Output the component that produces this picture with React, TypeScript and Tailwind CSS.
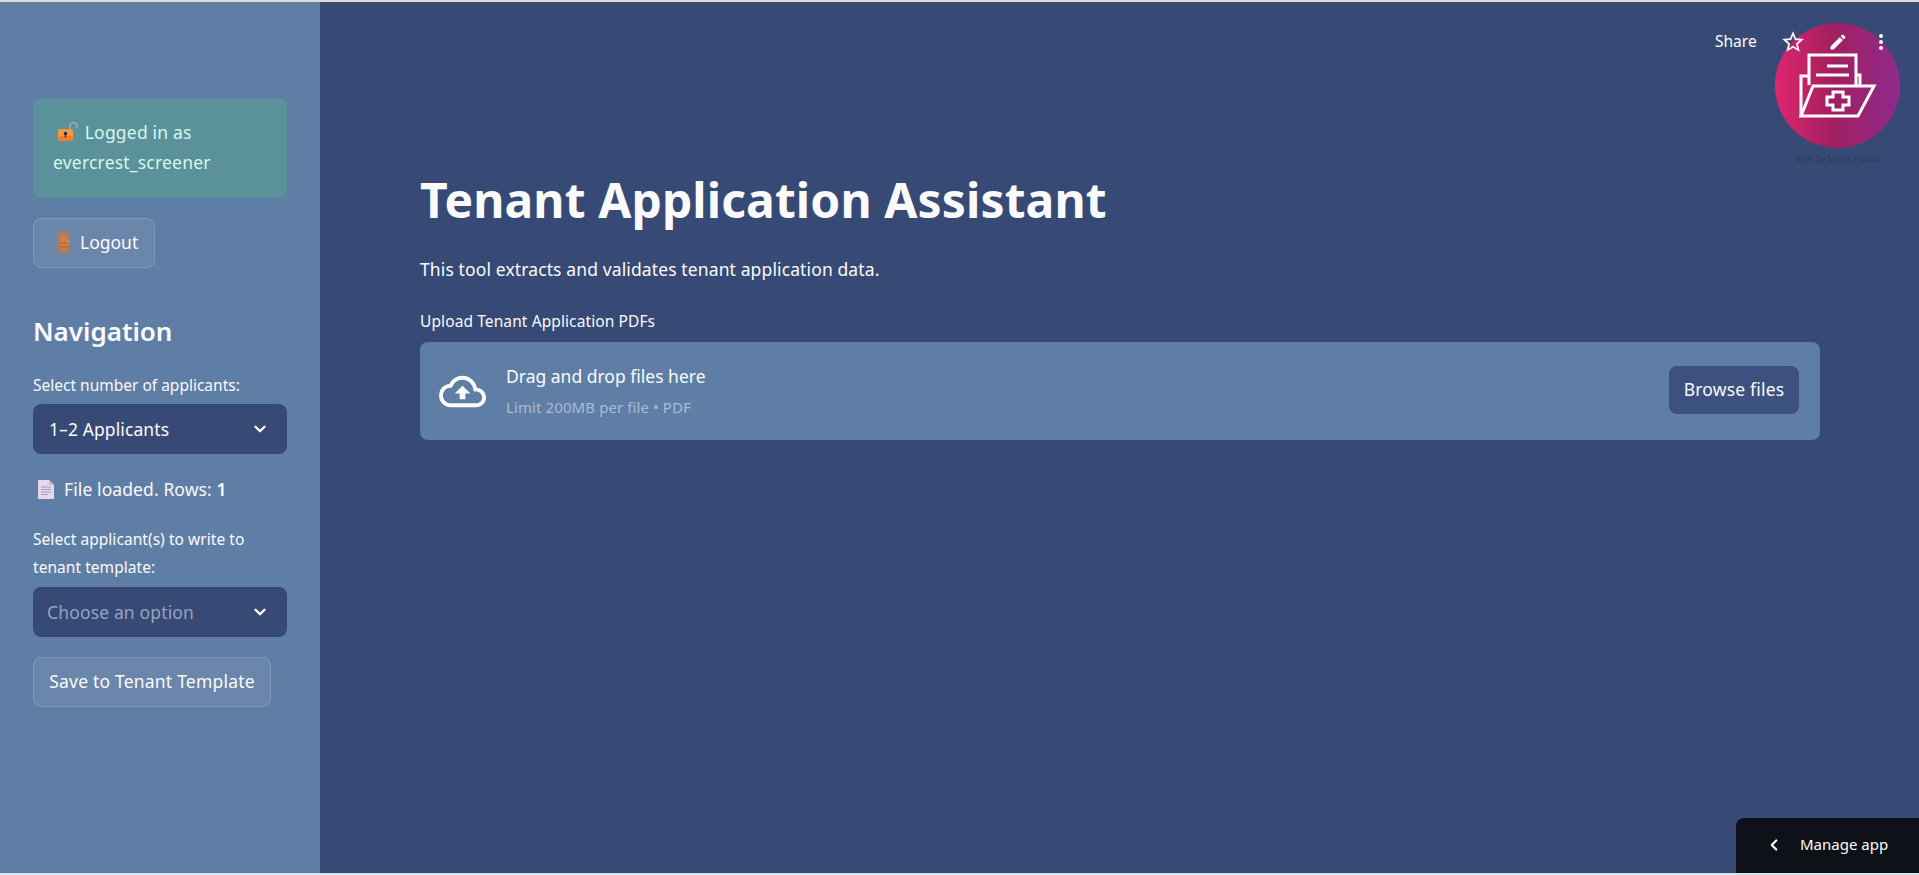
import { ChevronDown, ChevronLeft } from "lucide-react";
import { MdEdit, MdMoreVert, MdOutlineCloudUpload, MdStarBorder } from "react-icons/md";

const font = "font-['Noto_Sans',sans-serif]";

function LockIcon() {
  return (
    <svg width="21" height="21" viewBox="0 0 21 21" className="mr-[2px] ml-[4px] inline-block align-[-3px]">
      <path d="M13 9V5a3.5 3.5 0 0 1 7 0v2" fill="none" stroke="#a9a8bd" strokeWidth="1.6" />
      <rect x="1" y="8" width="15" height="12" rx="1.5" fill="#f59a3c" />
      <rect x="1" y="15" width="15" height="5" rx="1.5" fill="#ef7f2e" />
      <circle cx="8.5" cy="12.5" r="1.7" fill="#2d2a4a" />
      <rect x="7.8" y="13" width="1.4" height="3.5" fill="#2d2a4a" />
    </svg>
  );
}

function DoorIcon() {
  return (
    <svg width="13" height="21" viewBox="0 0 13 21" className="shrink-0">
      <rect x="0.5" y="0.5" width="12" height="20" fill="#c9814f" />
      <rect x="2" y="2" width="9" height="8" fill="none" stroke="#b06f42" />
      <rect x="2" y="11.5" width="9" height="3" fill="none" stroke="#b06f42" />
      <rect x="2" y="16" width="9" height="3" fill="none" stroke="#b06f42" />
      <circle cx="11" cy="9.5" r="0.8" fill="#f2c27e" />
    </svg>
  );
}

function PageIcon() {
  return (
    <svg width="16" height="20" viewBox="0 0 16 20" className="shrink-0">
      <path d="M0 1h11l5 5v14H0z" fill="#e6d8ec" />
      <path d="M11 1l5 5h-5z" fill="#c9b8d6" />
      <path d="M3 8h10M3 10.5h10M3 13h10M3 15.5h7" stroke="#a99bb4" strokeWidth="1" />
    </svg>
  );
}

function FolderLogo() {
  return (
    <svg viewBox="0 0 125 125" className="absolute inset-0 h-full w-full" fill="none" stroke="#ffffff" strokeWidth="3" strokeLinejoin="miter">
      <path d="M34 62V32h47v30" />
      <path d="M52 43h21M41 52h33" />
      <path d="M81 52h4v11" />
      <path d="M34 53h-8v40" />
      <path d="M38 63h61L83 93H26z" />
      <path d="M58 69h10v5h6v8h-6v5H58v-5h-6v-8h6z" />
    </svg>
  );
}

export default function App() {
  return (
    <div className={`${font} relative flex h-[875px] w-full flex-col overflow-hidden bg-[#d3e8ee] text-[#fafafa]`}>
      <div className="h-[2px] shrink-0 bg-[#dcdcdc]" />
      <div className="flex h-[871px] shrink-0">
        <aside className="flex w-[320px] shrink-0 flex-col bg-[#5f7ea6] px-[33px] pt-[96px]">
          <div className="h-[100px] rounded-[8px] bg-[#5a919a] px-[20px] pt-[19px] text-[17.5px] leading-[30px] tracking-[0.2px] text-[#d8f8ea]">
            <LockIcon /> Logged in as
            <br />
            evercrest_screener
          </div>
          <button className="mt-[20px] flex h-[50px] w-[122px] items-center gap-[10px] rounded-[8px] border border-[#8098ba] bg-[#6b86ab] pb-[1px] pl-[23px] text-[17.5px]">
            <DoorIcon />
            Logout
          </button>
          <h2 className="mt-[46px] text-[26px] leading-[34px] font-semibold">Navigation</h2>
          <label className="mt-[27px] text-[15.5px] leading-[20px]">Select number of applicants:</label>
          <div className="mt-[9px] flex h-[50px] items-center justify-between rounded-[8px] bg-[#364a75] pr-[18px] pl-[16px] text-[17.5px] tracking-[0.1px]">
            1–2 Applicants
            <ChevronDown size={18} strokeWidth={3} />
          </div>
          <div className="mt-[24px] flex h-[22px] items-center gap-[10px] pl-[5px] text-[17.5px] tracking-[0.1px]">
            <PageIcon />
            <span>
              File loaded. Rows: <b className="font-semibold">1</b>
            </span>
          </div>
          <label className="mt-[25px] text-[15.5px] leading-[28px] tracking-[0.05px]">
            Select applicant(s) to write to
            <br />
            tenant template:
          </label>
          <div className="mt-[6px] flex h-[50px] items-center justify-between rounded-[8px] bg-[#364a75] pr-[18px] pl-[14px] text-[17.5px] tracking-[0.15px] text-[#93a5bf]">
            Choose an option
            <ChevronDown size={18} strokeWidth={3} className="text-white" />
          </div>
          <button className="mt-[20px] h-[50px] w-[238px] rounded-[8px] border border-[#8098ba] bg-[#6b86ab] pb-[1px] text-[17.5px] tracking-[0.2px]">
            Save to Tenant Template
          </button>
        </aside>

        <main className="flex-1 bg-[#364a75] pt-[165px] pl-[100px]">
          <h1 className="text-[48px] leading-[66px] font-bold tracking-[0.1px]">Tenant Application Assistant</h1>
          <p className="mt-[22px] text-[17.5px] leading-[28px] tracking-[0.12px]">This tool extracts and validates tenant application data.</p>
          <label className="mt-[28px] block text-[15.5px] leading-[20px] tracking-[0.1px]">Upload Tenant Application PDFs</label>
          <div className="mt-[11px] flex h-[98px] w-[1400px] items-center rounded-[8px] bg-[#5f7ea6] pr-[21px] pl-[19px]">
            <MdOutlineCloudUpload size={47} />
            <div className="mb-[3px] ml-[20px] flex-1">
              <div className="text-[17.5px] leading-[26px]">Drag and drop files here</div>
              <div className="mt-[8px] text-[15px] leading-[20px] tracking-[0.1px] text-[#a9bad0]">Limit 200MB per file • PDF</div>
            </div>
            <button className="mb-[2px] h-[48px] w-[130px] rounded-[8px] bg-[#3d5180] pb-[1px] text-[17.5px] tracking-[0.2px]">Browse files</button>
          </div>
        </main>
      </div>

      {/* logo sits over the toolbar */}
      <div className="absolute top-[23px] left-[1775px] h-[125px] w-[125px] rounded-full bg-[linear-gradient(90deg,#e0266f_0%,#a31f5f_45%,#8f2a8c_100%)]">
        <FolderLogo />
      </div>
      <div className="absolute top-[153px] left-[1795px] text-[9px] leading-[12px] tracking-[-0.1px] text-[#2b3a5c]">Icon by Iconic Panda</div>

      <div className="absolute top-[24px] left-[1715px] flex h-[36px] items-center text-[15.5px]">
        Share
        <MdStarBorder size={26} className="ml-[23px]" />
        <MdEdit size={20} className="ml-[22px]" />
        <MdMoreVert size={24} className="ml-[21px]" />
      </div>

      <div className="absolute right-0 bottom-[2px] flex h-[55px] w-[183px] items-center rounded-tl-[8px] bg-[#0e1117] pb-[2px] pl-[29px] text-[15px]">
        <ChevronLeft size={18} strokeWidth={3} />
        <span className="ml-[17px]">Manage app</span>
      </div>
    </div>
  );
}
